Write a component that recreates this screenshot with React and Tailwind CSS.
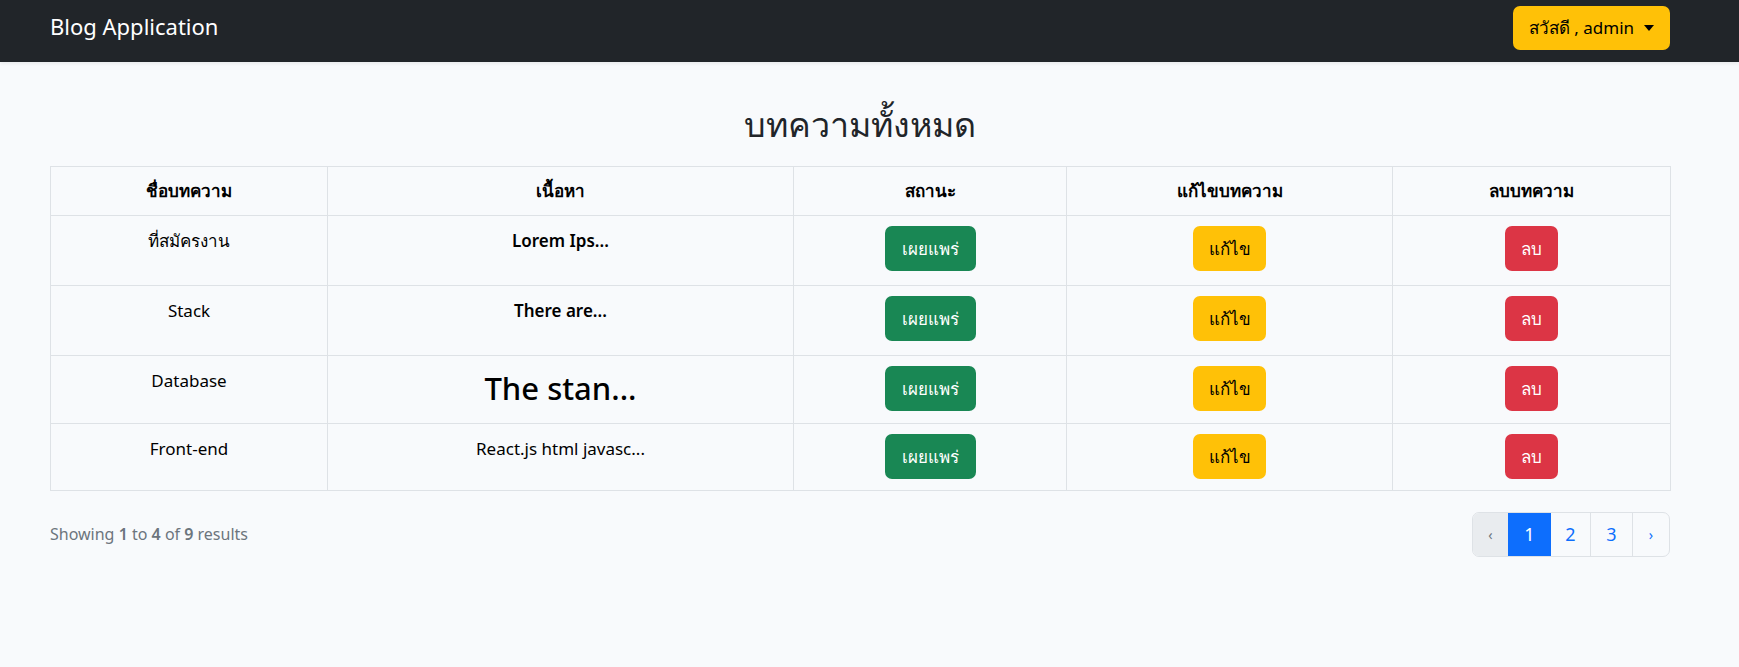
import React from "react";

const rows = [
  { title: "ที่สมัครงาน", content: "Lorem Ips...", kind: "bold", h: "h-[70px]" },
  { title: "Stack", content: "There are...", kind: "bold", h: "h-[70px]" },
  { title: "Database", content: "The stan...", kind: "big", h: "h-[68px]" },
  { title: "Front-end", content: "React.js html javasc...", kind: "normal", h: "h-[67px]" },
];

function ContentText({ kind, children }) {
  if (kind === "big") {
    return <div className="text-[31px] leading-[40px] font-medium text-black pt-[4px]">{children}</div>;
  }
  if (kind === "bold") {
    return <div className="text-[17px] leading-[34px] font-semibold text-black">{children}</div>;
  }
  return <div className="text-[17px] leading-[34px] text-black">{children}</div>;
}

export default function App() {
  return (
    <div className="min-h-[667px] bg-[#f8fafc] text-[#212529]" style={{ fontFamily: '"Noto Sans", "Open Sans", sans-serif' }}>
      <nav className="h-[62px] bg-[#212529] shadow-[0_2px_3px_rgba(0,0,0,0.06)] pl-[50px] pr-[69px] pt-[6px] pb-[12px] flex items-center justify-between">
        <span className="text-white text-[22px] leading-[30px] mb-[4px]">Blog Application</span>
        <button className="h-[44px] w-[157px] rounded-[7px] bg-[#ffc107] text-black text-[17px] flex items-center justify-center gap-[10px]">
          <span>สวัสดี , admin</span>
          <span className="inline-block w-0 h-0 border-l-[5px] border-r-[5px] border-t-[6px] border-l-transparent border-r-transparent border-t-black"></span>
        </button>
      </nav>

      <main className="pl-[50px] pr-[69px]">
        <h1 className="mt-[41px] mb-[21px] h-[42px] flex items-center justify-center text-[34px] text-[#212529] font-normal">บทความทั้งหมด</h1>

        <table className="w-[1620px] border-collapse table-fixed">
          <colgroup>
            <col className="w-[277px]" />
            <col className="w-[466px]" />
            <col className="w-[273px]" />
            <col className="w-[326px]" />
            <col className="w-[278px]" />
          </colgroup>
          <thead>
            <tr className="h-[49px]">
              {["ชื่อบทความ", "เนื้อหา", "สถานะ", "แก้ไขบทความ", "ลบบทความ"].map((h) => (
                <th key={h} className="border border-[#dee2e6] text-center align-middle text-[17px] font-bold text-black">{h}</th>
              ))}
            </tr>
          </thead>
          <tbody>
            {rows.map((r) => (
              <tr key={r.title} className={r.h}>
                <td className="border border-[#dee2e6] text-center align-top pt-[8px] text-[17px] leading-[34px] text-black">{r.title}</td>
                <td className="border border-[#dee2e6] text-center align-top pt-[8px]">
                  <ContentText kind={r.kind}>{r.content}</ContentText>
                </td>
                <td className="border border-[#dee2e6] text-center align-top pt-[10px]">
                  <span className="inline-flex items-center justify-center h-[45px] w-[91px] rounded-[7px] bg-[#198754] text-white text-[17px]">เผยแพร่</span>
                </td>
                <td className="border border-[#dee2e6] text-center align-top pt-[10px]">
                  <span className="inline-flex items-center justify-center h-[45px] w-[73px] rounded-[7px] bg-[#ffc107] text-black text-[17px]">แก้ไข</span>
                </td>
                <td className="border border-[#dee2e6] text-center align-top pt-[10px]">
                  <span className="inline-flex items-center justify-center h-[45px] w-[53px] rounded-[7px] bg-[#dc3545] text-white text-[17px]">ลบ</span>
                </td>
              </tr>
            ))}
          </tbody>
        </table>

        <div className="mt-[21px] flex items-center justify-between w-[1620px]">
          <p className="text-[16px] text-[#6c757d] mb-[2px]">
            Showing <span className="font-semibold">1</span> to <span className="font-semibold">4</span> of <span className="font-semibold">9</span> results
          </p>
          <div className="flex h-[45px] rounded-[7px] border border-[#dee2e6] overflow-hidden text-[18px]">
            <span className="w-[35px] flex items-center justify-center bg-[#e9ecef] text-[#6c757d] text-[14px]">‹</span>
            <span className="w-[43px] flex items-center justify-center bg-[#0d6efd] text-white">1</span>
            <span className="w-[40px] flex items-center justify-center text-[#0d6efd] border-r border-[#dee2e6]">2</span>
            <span className="w-[42px] flex items-center justify-center text-[#0d6efd] border-r border-[#dee2e6]">3</span>
            <span className="w-[36px] flex items-center justify-center text-[#0d6efd] text-[14px]">›</span>
          </div>
        </div>
      </main>
    </div>
  );
}
